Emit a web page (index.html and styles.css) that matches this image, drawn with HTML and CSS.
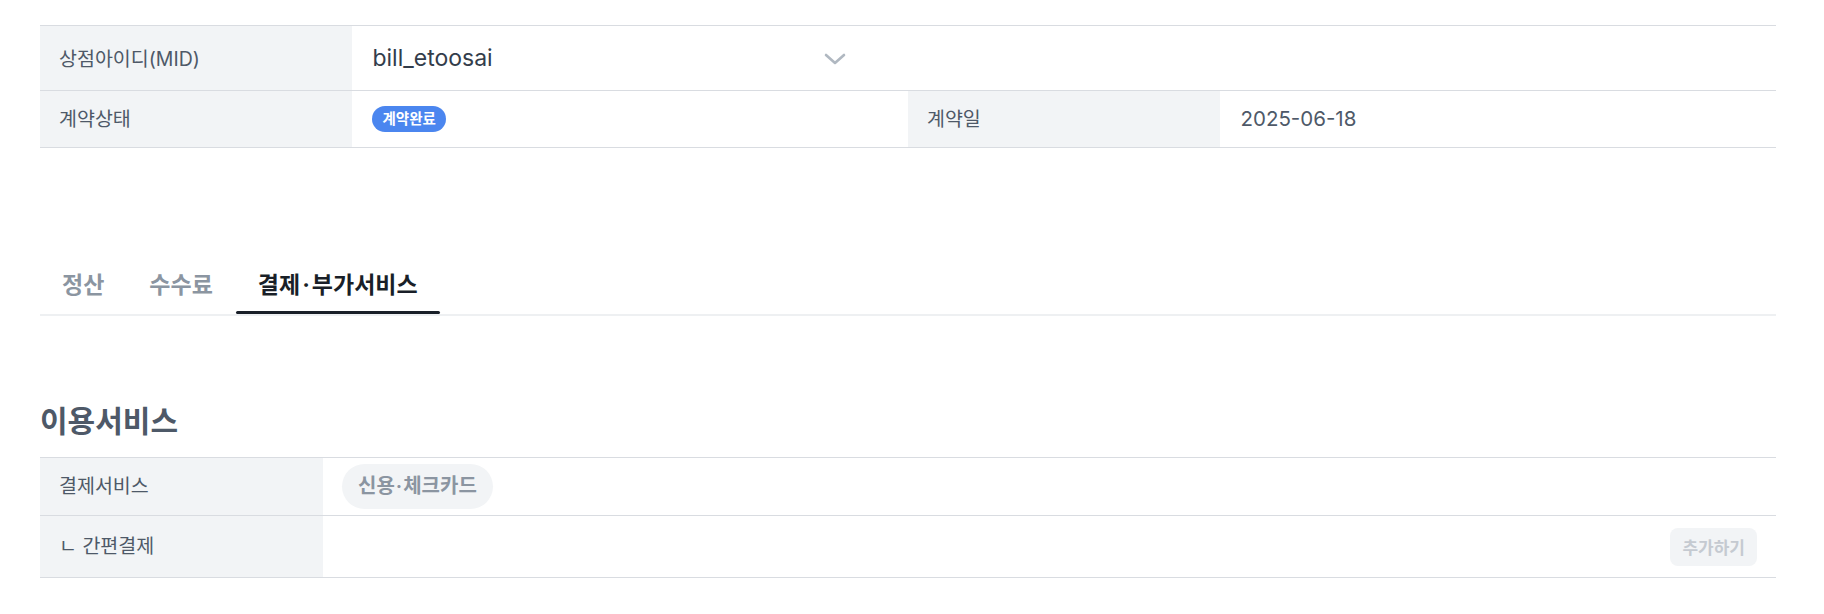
FILE: index.html
```html
<!DOCTYPE html>
<html lang="ko">
<head>
<meta charset="utf-8">
<title>결제·부가서비스</title>
<link rel="stylesheet" href="styles.css">
</head>
<body>
<div class="page">
  <div class="info-table">
    <div class="cell label">상점아이디(MID)</div>
    <div class="cell value span-3">
      <div class="select">
        <span class="select-text">bill_etoosai</span>
        <svg class="chevron" width="22" height="12" viewBox="0 0 22 12" aria-hidden="true">
          <path d="M2 2 L11 10 L20 2" fill="none" stroke="#b0b8c1" stroke-width="2.6" stroke-linecap="round" stroke-linejoin="round"/>
        </svg>
      </div>
    </div>
    <div class="cell label">계약상태</div>
    <div class="cell value"><span class="badge">계약완료</span></div>
    <div class="cell label">계약일</div>
    <div class="cell value date">2025-06-18</div>
  </div>

  <nav class="tabs">
    <span class="tab">정산</span>
    <span class="tab">수수료</span>
    <span class="tab active">결제<span class="dot">·</span>부가서비스</span>
  </nav>

  <h2 class="section-title">이용서비스</h2>

  <div class="service-table">
    <div class="cell label">결제서비스</div>
    <div class="cell value"><span class="chip">신용<span class="dot">·</span>체크카드</span></div>
    <div class="cell label row-2">ㄴ 간편결제</div>
    <div class="cell value row-2 end"><button class="add-btn" type="button">추가하기</button></div>
  </div>
</div>
</body>
</html>
```

FILE: styles.css
```css
* { box-sizing: border-box; }

html, body {
  margin: 0;
  background: #ffffff;
}

body {
  font-family: Inter, "Noto Sans CJK KR", "Noto Sans", sans-serif;
  color: #4e5968;
}

.page {
  padding: 25px 48px 0 40px;
}

/* top info table */
.info-table {
  display: grid;
  grid-template-columns: 18% 32% 18% 32%;
  border-top: 1px solid #d9dce1;
}

.cell {
  display: flex;
  align-items: center;
  padding: 0 20px;
  border-bottom: 1px solid #d9dce1;
  min-height: 57px;
  line-height: 1.35;
}

.info-table .cell:nth-child(-n+2) {
  min-height: 65px;
  padding-top: 2px;
}

.label {
  background: #f2f4f6;
  font-size: 19.5px;
  color: #4e5968;
  padding-left: 19px;
}

.value {
  background: #ffffff;
}

.span-3 {
  grid-column: span 3;
}

.select {
  display: flex;
  align-items: center;
  justify-content: space-between;
  width: 474px;
}

.select-text {
  font-size: 23px;
  color: #333d4b;
}

.chevron {
  display: block;
}

.badge {
  display: inline-flex;
  align-items: center;
  height: 26px;
  padding: 0 10px;
  border-radius: 13px;
  background: #4b86ef;
  color: #ffffff;
  font-size: 14.5px;
  font-weight: 700;
}

.date {
  font-size: 20.5px;
  color: #4e5968;
}

/* tabs */
.tabs {
  display: flex;
  gap: 1px;
  margin-top: 109px;
  border-bottom: 2px solid #eef0f2;
}

.tab {
  position: relative;
  padding: 13px 22px 14px;
  font-size: 23px;
  line-height: 30px;
  font-weight: 700;
  color: #8b95a1;
}

.tab.active {
  color: #191f28;
}

.tab.active::after {
  content: "";
  position: absolute;
  left: 0;
  right: 0;
  bottom: 0;
  height: 3px;
  border-radius: 2px;
  background: #191f28;
}

.dot {
  margin: 0 2px;
}

/* section */
.section-title {
  margin: 87px 0 18px;
  font-size: 30px;
  line-height: 36px;
  font-weight: 700;
  color: #4e5968;
}

.service-table {
  display: grid;
  grid-template-columns: 283px 1fr;
  border-top: 1px solid #d9dce1;
}

.service-table .cell {
  min-height: 58px;
}

.service-table .row-2 {
  min-height: 62px;
}

.service-table .value {
  padding-left: 19px;
}

.end {
  justify-content: flex-end;
  padding-right: 19px;
}

.chip {
  display: inline-flex;
  align-items: center;
  height: 45px;
  padding: 0 16px;
  border-radius: 23px;
  background: #f2f4f6;
  color: #8b95a1;
  font-size: 20px;
  font-weight: 600;
}

.chip .dot {
  margin: 0 1px;
}

.add-btn {
  height: 38px;
  padding: 0 12px;
  border: none;
  border-radius: 8px;
  background: #f2f4f6;
  color: #c5cad1;
  font-family: inherit;
  font-size: 17px;
  font-weight: 700;
  cursor: default;
}
```
